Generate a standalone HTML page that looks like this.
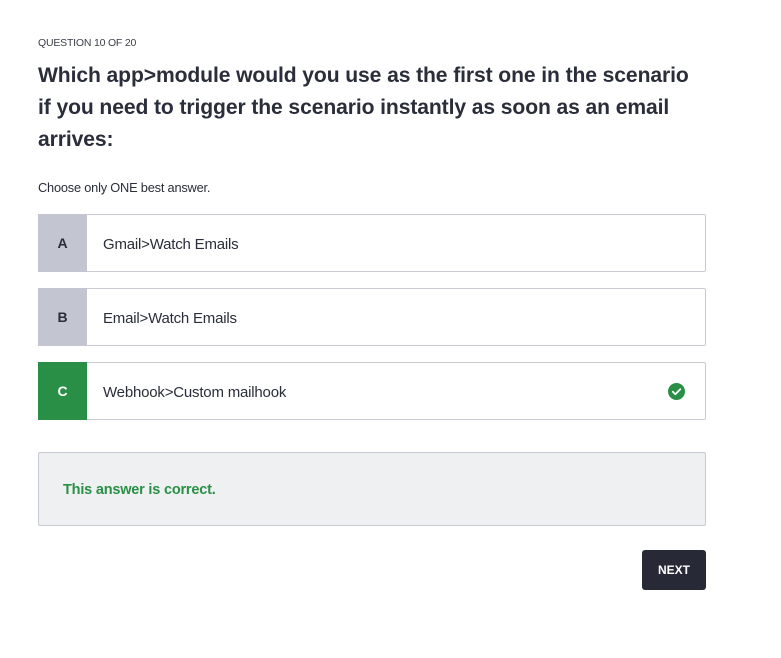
<!DOCTYPE html>
<html><head><meta charset="utf-8"><style>
*{margin:0;padding:0;box-sizing:border-box}
body{width:781px;height:658px;background:#fff;font-family:"Liberation Sans",sans-serif;color:#2a2d3a;position:relative;overflow:hidden}
.q{position:absolute;left:38px;top:37px;font-size:10.5px;color:#3a3d48;letter-spacing:-0.2px}
h1{position:absolute;left:38px;top:60px;font-size:21.1px;line-height:32px;font-weight:bold;white-space:nowrap;letter-spacing:-0.1px;color:#2a2d3a}
.c{position:absolute;left:38px;top:180px;font-size:12.8px;color:#2a2d3a;letter-spacing:-0.2px}
.opt{position:absolute;left:38px;width:668px;height:58px;border:1px solid #c9cad3;border-radius:2px;background:#fff}
.opt .l{position:absolute;left:-1px;top:-1px;width:49px;height:58px;background:#c3c5d0;font-weight:bold;font-size:14px;text-align:center;line-height:58px;color:#2a2d3a}
.opt .t{position:absolute;left:64px;top:2px;line-height:56px;font-size:15px;letter-spacing:-0.2px}
.opt.g .l{background:#2a8f46;color:#fff}
.fb{position:absolute;left:38px;top:452px;width:668px;height:74px;background:#eff0f2;border:1px solid #c9cad3;border-radius:2px}
.fb span{position:absolute;left:24px;top:29px;font-size:14.5px;font-weight:bold;color:#2a8f46;letter-spacing:-0.2px}
.next{position:absolute;left:642px;top:550px;width:64px;height:40px;background:#272a36;border-radius:3px;color:#fff;font-weight:bold;font-size:12px;text-align:center;line-height:40px}
</style></head><body>
<div class="q">QUESTION 10 OF 20</div>
<h1>Which app&gt;module would you use as the first one in the scenario<br>if you need to trigger the scenario instantly as soon as an email<br>arrives:</h1>
<div class="c">Choose only ONE best answer.</div>
<div class="opt" style="top:214px"><div class="l">A</div><div class="t">Gmail&gt;Watch Emails</div></div>
<div class="opt" style="top:288px"><div class="l">B</div><div class="t">Email&gt;Watch Emails</div></div>
<div class="opt g" style="top:362px"><div class="l">C</div><div class="t">Webhook&gt;Custom mailhook</div>
<svg style="position:absolute;left:629px;top:20px" width="17" height="17" viewBox="0 0 17 17"><circle cx="8.5" cy="8.5" r="8.5" fill="#2a8f46"/><path d="M4.8 8.7l2.5 2.5 5-5" stroke="#fff" stroke-width="1.8" fill="none" stroke-linecap="round" stroke-linejoin="round"/></svg></div>
<div class="fb"><span>This answer is correct.</span></div>
<div class="next">NEXT</div>
</body></html>
